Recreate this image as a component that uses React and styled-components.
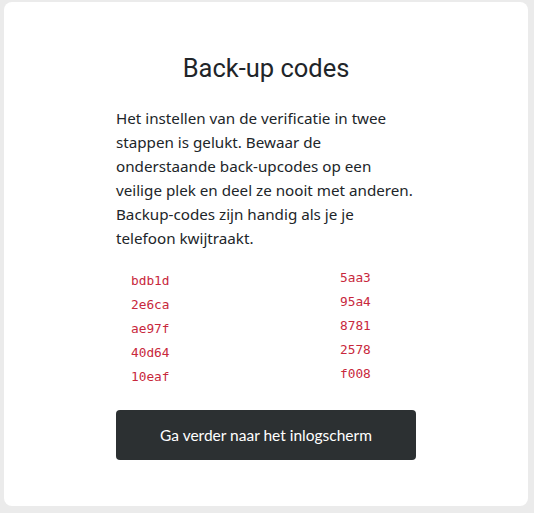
import React from "react";
import styled, { createGlobalStyle } from "styled-components";

const Global = createGlobalStyle`
  html, body { margin: 0; padding: 0; background: #ebebeb; }
  body { font-family: "Noto Sans", sans-serif; }
`;

const Page = styled.div`
  padding: 2px 6px 7px 4px;
  box-sizing: border-box;
`;

const Card = styled.div`
  background: #fff;
  border-radius: 8px;
  height: 504px;
  box-sizing: border-box;
  padding: 50px 0 0;
  display: flex;
  flex-direction: column;
  align-items: center;
`;

const Content = styled.div`
  width: 300px;
  display: flex;
  flex-direction: column;
`;

const Title = styled.h1`
  margin: 0;
  font-family: Roboto, sans-serif;
  font-weight: 400;
  font-size: 25.5px;
  line-height: 32px;
  color: #212529;
  text-align: center;
`;

const Text = styled.p`
  margin: 22px 0 0;
  font-family: "Noto Sans", sans-serif;
  font-size: 15.2px;
  line-height: 24px;
  color: #212529;
`;

const Codes = styled.div`
  display: grid;
  grid-template-columns: 209px 1fr;
  padding-left: 15px;
  margin-top: 19px;
`;

const Code = styled.code`
  font-family: "DejaVu Sans Mono", monospace;
  font-size: 12.8px;
  line-height: 24px;
  color: #c8283c;
  transform: translateY(${(p) => (p.$right ? -3 : 0)}px);
`;

const Button = styled.button`
  margin-top: 21px;
  height: 50px;
  border: none;
  border-radius: 4px;
  background: #2c3032;
  color: #fff;
  font-family: Lato, sans-serif;
  font-size: 15.5px;
  cursor: pointer;
`;

const left = ["bdb1d", "2e6ca", "ae97f", "40d64", "10eaf"];
const right = ["5aa3", "95a4", "8781", "2578", "f008"];

export default function App() {
  return (
    <>
      <Global />
      <Page>
        <Card>
          <Content>
            <Title>Back-up codes</Title>
            <Text>
              Het instellen van de verificatie in twee stappen is gelukt. Bewaar de
              onderstaande back-upcodes op een veilige plek en deel ze nooit met
              anderen. Backup-codes zijn handig als je je telefoon kwijtraakt.
            </Text>
            <Codes>
              {left.map((c, i) => (
                <React.Fragment key={c}>
                  <Code>{c}</Code>
                  <Code $right>{right[i]}</Code>
                </React.Fragment>
              ))}
            </Codes>
            <Button>Ga verder naar het inlogscherm</Button>
          </Content>
        </Card>
      </Page>
    </>
  );
}
